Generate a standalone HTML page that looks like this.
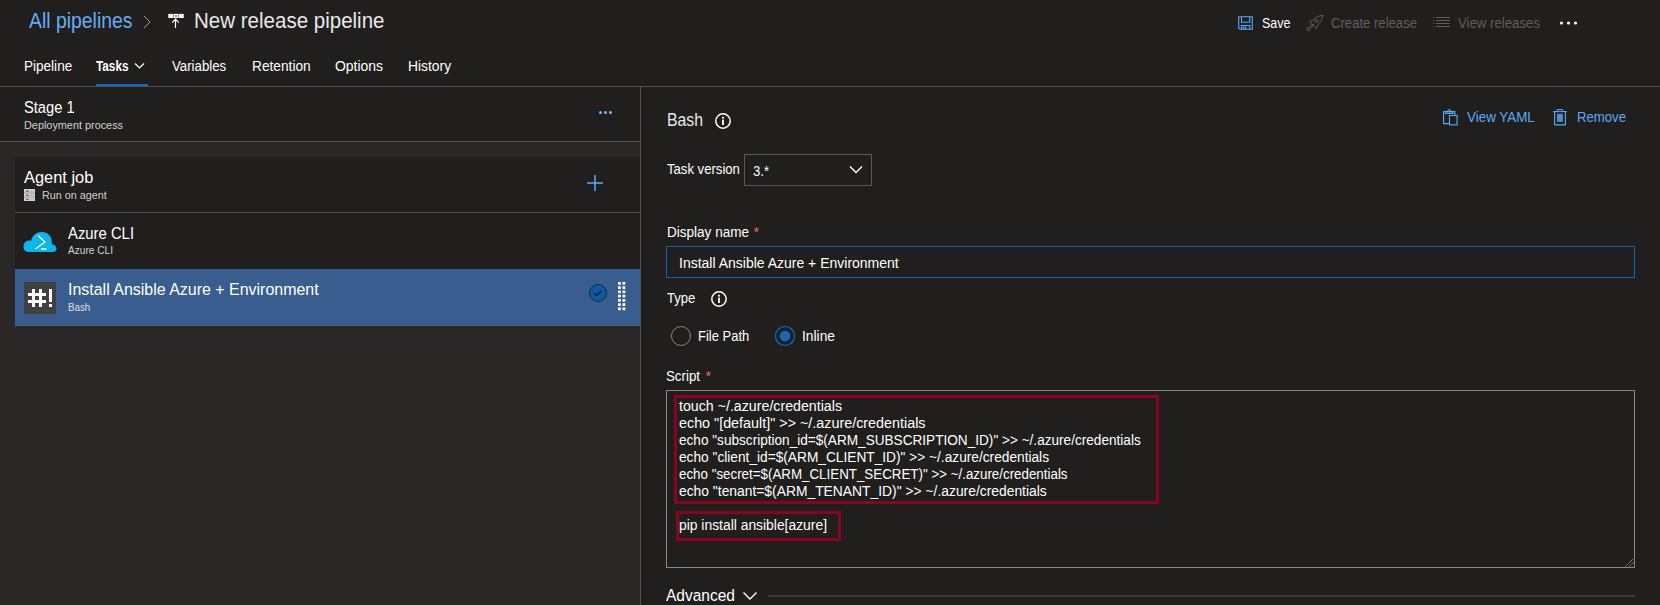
<!DOCTYPE html><html><head><meta charset="utf-8"><style>
html,body{margin:0;padding:0;width:1660px;height:605px;overflow:hidden;background:#201f1e;font-family:"Liberation Sans",sans-serif;}
.t{position:absolute;white-space:pre;}
.b{position:absolute;box-sizing:border-box;}
svg{position:absolute;overflow:visible;}
</style></head><body>
<div class="t" style="left:29px;top:10.38px;font-size:22px;line-height:22px;color:#67adf3;font-weight:normal;transform:scaleX(0.8816);transform-origin:0 0;">All pipelines</div>
<svg style="left:143px;top:15px" width="8" height="14"><path d="M1 1 L7 7 L1 13" fill="none" stroke="#a19f9d" stroke-width="1"/></svg>
<svg style="left:168px;top:13px" width="16" height="16">
<rect x="0.3" y="0.9" width="15.4" height="4.1" fill="#fff"/>
<rect x="4.9" y="0.9" width="0.8" height="4.1" fill="#6b6a8a"/><rect x="10.3" y="0.9" width="0.8" height="4.1" fill="#6b6a8a"/>
<rect x="7.3" y="2.2" width="1.4" height="1.5" fill="#3a2a3a"/>
<path d="M7.5 15 V6.2 M4.2 9.6 L7.5 6.2 L10.8 9.6" fill="none" stroke="#fff" stroke-width="1.2"/>
</svg>
<div class="t" style="left:194px;top:10.38px;font-size:22px;line-height:22px;color:#e8e8e8;font-weight:normal;transform:scaleX(0.9328);transform-origin:0 0;">New release pipeline</div>
<svg style="left:1238px;top:16px" width="15" height="14" viewBox="0 0 15 14">
<g fill="none" stroke="#5ea8fb" stroke-width="1.1">
<path d="M0.7 0.7 H14.3 V13.3 H2 L0.7 12 Z"/>
<path d="M3.5 0.7 V6.2 H11.8 V0.7"/>
<path d="M3.5 13.3 V9.5 H11.8 V13.3"/>
<path d="M5.3 13.3 V11.3 H7.8 V13.3"/>
</g></svg>
<div class="t" style="left:1262px;top:15.94px;font-size:14.25px;line-height:14.25px;color:#fff;font-weight:normal;transform:scaleX(0.8775);transform-origin:0 0;">Save</div>
<svg style="left:1306px;top:14px" width="18" height="18" viewBox="0 0 18 18">
<g fill="none" stroke="#5f5e5d" stroke-width="1">
<path d="M16.8 1.2 Q16.5 7 11.8 11.2 L10.6 14.3 L8.2 12.2 L5.8 9.8 L3.5 7.4 L6.6 6.3 Q10.8 1.5 16.8 1.2 Z"/>
<circle cx="10.6" cy="7" r="1.4"/>
<ellipse cx="6" cy="11.6" rx="1.7" ry="0.9" transform="rotate(-45 6 11.6)"/>
<circle cx="2.4" cy="15" r="1.6"/>
</g></svg>
<div class="t" style="left:1331px;top:15.94px;font-size:14.25px;line-height:14.25px;color:#5f5e5d;font-weight:normal;transform:scaleX(0.9202);transform-origin:0 0;">Create release</div>
<svg style="left:1433px;top:17px" width="17" height="12" viewBox="0 0 17 12">
<g stroke="#5f5e5d" stroke-width="1">
<path d="M0 0.5 H1 M0 3.5 H1 M0 6.5 H1 M0 9.5 H1"/>
<path d="M3 0.5 H17 M3 3.5 H17 M3 6.5 H17 M3 9.5 H17"/>
</g></svg>
<div class="t" style="left:1458px;top:15.94px;font-size:14.25px;line-height:14.25px;color:#5f5e5d;font-weight:normal;transform:scaleX(0.9271);transform-origin:0 0;">View releases</div>
<svg style="left:1559px;top:21px" width="20" height="4"><circle cx="2.5" cy="2" r="1.6" fill="#fff"/><circle cx="9.5" cy="2" r="1.6" fill="#fff"/><circle cx="16.5" cy="2" r="1.6" fill="#fff"/></svg>
<div class="t" style="left:23.5px;top:59.44px;font-size:14.25px;line-height:14.25px;color:#fff;font-weight:normal;transform:scaleX(0.9507);transform-origin:0 0;">Pipeline</div>
<div class="t" style="left:96.4px;top:59.44px;font-size:14.25px;line-height:14.25px;color:#fff;font-weight:bold;transform:scaleX(0.8261);transform-origin:0 0;">Tasks</div>
<div class="t" style="left:172.3px;top:59.44px;font-size:14.25px;line-height:14.25px;color:#fff;font-weight:normal;transform:scaleX(0.9289);transform-origin:0 0;">Variables</div>
<div class="t" style="left:251.5px;top:59.44px;font-size:14.25px;line-height:14.25px;color:#fff;font-weight:normal;transform:scaleX(0.9623);transform-origin:0 0;">Retention</div>
<div class="t" style="left:335px;top:59.44px;font-size:14.25px;line-height:14.25px;color:#fff;font-weight:normal;transform:scaleX(0.9795);transform-origin:0 0;">Options</div>
<div class="t" style="left:408.1px;top:59.44px;font-size:14.25px;line-height:14.25px;color:#fff;font-weight:normal;transform:scaleX(0.9721);transform-origin:0 0;">History</div>
<svg style="left:134px;top:62px" width="12" height="8"><path d="M1 1.5 L5.5 6 L10 1.5" fill="none" stroke="#fff" stroke-width="1.2"/></svg>
<div class="b" style="left:96px;top:84px;width:52px;height:2px;background:#0f6cbd"></div>
<div class="b" style="left:0;top:86px;width:1660px;height:1px;background:#515050"></div>
<div class="b" style="left:0;top:142px;width:640px;height:463px;background:#292827"></div>
<div class="b" style="left:0;top:141px;width:640px;height:1px;background:#515050"></div>
<div class="b" style="left:640px;top:87px;width:1px;height:518px;background:#515050"></div>
<div class="t" style="left:24.4px;top:99.24px;font-size:16.25px;line-height:16.25px;color:#fff;font-weight:normal;transform:scaleX(0.9033);transform-origin:0 0;">Stage 1</div>
<div class="t" style="left:24.4px;top:119.90px;font-size:10.75px;line-height:10.75px;color:#d2d0ce;font-weight:normal;transform:scaleX(1.0104);transform-origin:0 0;">Deployment process</div>
<svg style="left:599px;top:111px" width="14" height="3"><circle cx="1.5" cy="1.5" r="1.5" fill="#78b8f8"/><circle cx="6.5" cy="1.5" r="1.5" fill="#78b8f8"/><circle cx="11.5" cy="1.5" r="1.5" fill="#78b8f8"/></svg>
<div class="b" style="left:15px;top:157px;width:625px;height:168px;background:#201f1e"></div>
<div class="t" style="left:24.1px;top:169.24px;font-size:16.25px;line-height:16.25px;color:#fff;font-weight:normal;transform:scaleX(1.0093);transform-origin:0 0;">Agent job</div>
<svg style="left:24px;top:189px" width="11" height="12" viewBox="0 0 11 12">
<rect x="0" y="0" width="11" height="12" fill="#d4d2d0"/>
<rect x="0" y="3.7" width="11" height="0.7" fill="#8a8886"/><rect x="0" y="7.7" width="11" height="0.7" fill="#8a8886"/>
<g fill="#555"><rect x="1.8" y="1.7" width="3.2" height="1"/><rect x="1.8" y="5.7" width="3.2" height="1"/><rect x="1.8" y="9.7" width="3.2" height="1"/></g>
<g fill="#9a7ac8"><rect x="6.8" y="1.7" width="1" height="1"/><rect x="6.8" y="5.7" width="1" height="1"/><rect x="6.8" y="9.7" width="1" height="1"/></g>
<g fill="#6ab0d8"><rect x="8.6" y="1.7" width="1" height="1"/><rect x="8.6" y="5.7" width="1" height="1"/><rect x="8.6" y="9.7" width="1" height="1"/></g>
</svg>
<div class="t" style="left:41.8px;top:189.60px;font-size:10.75px;line-height:10.75px;color:#d2d0ce;font-weight:normal;transform:scaleX(1.0039);transform-origin:0 0;">Run on agent</div>
<svg style="left:587px;top:175px" width="16" height="16"><path d="M8 0 V16 M0 8 H16" stroke="#5ca9f6" stroke-width="1.5"/></svg>
<div class="b" style="left:15px;top:212px;width:625px;height:1px;background:#515050"></div>
<svg style="left:23px;top:231px" width="34" height="22" viewBox="0 0 34 22">
<path d="M6 21 C2 21 0.5 18.5 0.5 15.5 C0.5 12 3 9.5 6.5 9.5 C7 9.5 7.5 9.5 8 9.7 C9.5 4 13.5 1 19 1 C24.5 1 28.5 5 28.8 10.5 C29 12 29 13 28.8 13.3 C31.5 13.5 33.5 15.5 33.5 17.5 C33.5 19.5 32 21 30 21 Z" fill="#0cb6ea"/>
<path d="M15 4.5 L22 11 L12.5 18" fill="none" stroke="#fff" stroke-width="1.3"/>
<path d="M18 18 H23.5" stroke="#fff" stroke-width="1.5"/>
</svg>
<div class="t" style="left:68.2px;top:224.94px;font-size:16.25px;line-height:16.25px;color:#fff;font-weight:normal;transform:scaleX(0.9135);transform-origin:0 0;">Azure CLI</div>
<div class="t" style="left:68.2px;top:245.30px;font-size:10.75px;line-height:10.75px;color:#d2d0ce;font-weight:normal;transform:scaleX(0.9415);transform-origin:0 0;">Azure CLI</div>
<div class="b" style="left:15px;top:269px;width:625px;height:56px;background:#385d8e"></div>
<div class="b" style="left:15px;top:325px;width:625px;height:1px;background:#5e5d5c"></div>
<div class="b" style="left:24px;top:282px;width:32px;height:32px;background:#404040"></div>
<svg style="left:24px;top:282px" width="32" height="32"><g fill="#fff"><rect x="8" y="7" width="3" height="18"/><rect x="15" y="7" width="3" height="18"/><rect x="4" y="11" width="18" height="3"/><rect x="4" y="18" width="18" height="3"/><rect x="25" y="7" width="3" height="13"/><rect x="25" y="22" width="3" height="3"/></g></svg>
<div class="t" style="left:68.4px;top:281.24px;font-size:16.25px;line-height:16.25px;color:#fff;font-weight:normal;transform:scaleX(0.9821);transform-origin:0 0;">Install Ansible Azure + Environment</div>
<div class="t" style="left:68.4px;top:301.60px;font-size:10.75px;line-height:10.75px;color:#e1e1e1;font-weight:normal;transform:scaleX(0.9061);transform-origin:0 0;">Bash</div>
<svg style="left:589px;top:284px" width="18" height="18" viewBox="0 0 18 18"><circle cx="9" cy="9" r="8.5" fill="#0b5aa6" stroke="#1b2a3a" stroke-width="1"/><path d="M5.2 9.2 L7.8 11.5 L12.5 6.8" fill="none" stroke="#1a1a1a" stroke-width="1.5"/></svg>
<svg style="left:618px;top:282px" width="8" height="29"><rect x="0" y="0" width="2.8" height="2.7" fill="#fff"/><rect x="0" y="4.25" width="2.8" height="2.7" fill="#fff"/><rect x="0" y="8.5" width="2.8" height="2.7" fill="#fff"/><rect x="0" y="12.75" width="2.8" height="2.7" fill="#fff"/><rect x="0" y="17" width="2.8" height="2.7" fill="#fff"/><rect x="0" y="21.25" width="2.8" height="2.7" fill="#fff"/><rect x="0" y="25.5" width="2.8" height="2.7" fill="#fff"/><rect x="4.5" y="0" width="2.8" height="2.7" fill="#fff"/><rect x="4.5" y="4.25" width="2.8" height="2.7" fill="#fff"/><rect x="4.5" y="8.5" width="2.8" height="2.7" fill="#fff"/><rect x="4.5" y="12.75" width="2.8" height="2.7" fill="#fff"/><rect x="4.5" y="17" width="2.8" height="2.7" fill="#fff"/><rect x="4.5" y="21.25" width="2.8" height="2.7" fill="#fff"/><rect x="4.5" y="25.5" width="2.8" height="2.7" fill="#fff"/></svg>
<div class="t" style="left:666.7px;top:110.51px;font-size:18.3px;line-height:18.3px;color:#e8e8e8;font-weight:normal;transform:scaleX(0.8655);transform-origin:0 0;">Bash</div>
<svg style="left:715px;top:112.5px" width="16" height="16" viewBox="0 0 16 16"><circle cx="8" cy="8" r="7.2" fill="none" stroke="#fff" stroke-width="1.5"/><rect x="7.1" y="6.6" width="1.8" height="5.4" fill="#fff"/><rect x="7.1" y="3.8" width="1.8" height="1.8" fill="#fff"/></svg>
<svg style="left:1443px;top:109px" width="15" height="17" viewBox="0 0 15 17">
<g fill="none" stroke="#5ca9f6" stroke-width="1.1">
<path d="M6.5 14.6 H0.6 V2.6 H11.9 V6.3"/>
<path d="M2.6 2.6 V4.4 H9.9 V2.6"/>
<path d="M4.6 2.6 Q4.8 0.5 6.25 0.5 Q7.7 0.5 7.9 2.6"/>
<rect x="6.5" y="6.5" width="7.6" height="9.4" fill="#201f1e"/>
</g></svg>
<div class="t" style="left:1466.6px;top:109.94px;font-size:14.25px;line-height:14.25px;color:#5ca9f6;font-weight:normal;transform:scaleX(0.9407);transform-origin:0 0;">View YAML</div>
<svg style="left:1553px;top:109px" width="14" height="17" viewBox="0 0 14 17">
<rect x="3.9" y="4.9" width="5.9" height="7.9" fill="#5d7fa8"/>
<path d="M5 4.9 V12.8 M6.9 4.9 V12.8 M8.8 4.9 V12.8" stroke="#4a9af5" stroke-width="1"/>
<g fill="none" stroke="#5ca9f6" stroke-width="1.1">
<path d="M0 2.6 H14"/>
<path d="M4.2 2.6 V1.6 Q4.2 0.5 5.5 0.5 H8.5 Q9.8 0.5 9.8 1.6 V2.6"/>
<path d="M1.6 2.6 V15.4 Q1.6 15.9 2.1 15.9 H11.9 Q12.4 15.9 12.4 15.4 V2.6"/>
</g></svg>
<div class="t" style="left:1577px;top:109.94px;font-size:14.25px;line-height:14.25px;color:#5ca9f6;font-weight:normal;transform:scaleX(0.9235);transform-origin:0 0;">Remove</div>
<div class="t" style="left:666.7px;top:161.64px;font-size:14.25px;line-height:14.25px;color:#fff;font-weight:normal;transform:scaleX(0.9205);transform-origin:0 0;">Task version</div>
<div class="b" style="left:744px;top:154px;width:128px;height:32px;border:1px solid #5a5958"></div>
<div class="t" style="left:753px;top:163.94px;font-size:14.25px;line-height:14.25px;color:#fff;font-weight:normal;transform:scaleX(0.9180);transform-origin:0 0;">3.*</div>
<svg style="left:849px;top:165px" width="14" height="9"><path d="M1 1.5 L7 7.5 L13 1.5" fill="none" stroke="#fff" stroke-width="1.3"/></svg>
<div class="t" style="left:666.7px;top:224.94px;font-size:14.25px;line-height:14.25px;color:#fff;font-weight:normal;transform:scaleX(0.9499);transform-origin:0 0;">Display name</div>
<div class="t" style="left:753.5px;top:224.94px;font-size:14.25px;line-height:14.25px;color:#ee6a6e;font-weight:normal;">*</div>
<div class="b" style="left:666px;top:246px;width:969px;height:32px;border:1px solid #0c66b6"></div>
<div class="t" style="left:679.3px;top:255.74px;font-size:14.25px;line-height:14.25px;color:#fff;font-weight:normal;transform:scaleX(0.9819);transform-origin:0 0;">Install Ansible Azure + Environment</div>
<div class="t" style="left:666.8px;top:290.94px;font-size:14.25px;line-height:14.25px;color:#fff;font-weight:normal;transform:scaleX(0.9129);transform-origin:0 0;">Type</div>
<svg style="left:710.5px;top:290.5px" width="16" height="16" viewBox="0 0 16 16"><circle cx="8" cy="8" r="7.2" fill="none" stroke="#fff" stroke-width="1.5"/><rect x="7.1" y="6.6" width="1.8" height="5.4" fill="#fff"/><rect x="7.1" y="3.8" width="1.8" height="1.8" fill="#fff"/></svg>
<svg style="left:670px;top:325px" width="22" height="22" viewBox="0 0 22 22"><circle cx="11" cy="11" r="9.5" fill="none" stroke="#8a8886" stroke-width="1"/></svg>
<div class="t" style="left:697.5px;top:328.94px;font-size:14.25px;line-height:14.25px;color:#fff;font-weight:normal;transform:scaleX(0.9114);transform-origin:0 0;">File Path</div>
<svg style="left:774px;top:325px" width="22" height="22" viewBox="0 0 22 22"><circle cx="11" cy="11" r="9.5" fill="none" stroke="#0f6cbd" stroke-width="1.2"/><circle cx="11" cy="11" r="5.3" fill="#0f6cbd"/></svg>
<div class="t" style="left:801.7px;top:328.94px;font-size:14.25px;line-height:14.25px;color:#fff;font-weight:normal;transform:scaleX(0.9688);transform-origin:0 0;">Inline</div>
<div class="t" style="left:666.3px;top:368.74px;font-size:14.25px;line-height:14.25px;color:#fff;font-weight:normal;transform:scaleX(0.9334);transform-origin:0 0;">Script</div>
<div class="t" style="left:705.5px;top:368.94px;font-size:14.25px;line-height:14.25px;color:#ee6a6e;font-weight:normal;">*</div>
<div class="b" style="left:666px;top:390px;width:969px;height:178px;border:1px solid #8a8886"></div>
<svg style="left:1624px;top:557px" width="10" height="10"><path d="M1.5 9.5 L9.5 1.5 M5.5 9.5 L9.5 5.5" stroke="#b0aeac" stroke-width="1" stroke-dasharray="1 0.6"/></svg>
<div class="b" style="left:674px;top:395px;width:485px;height:109px;border:3px solid #8a0322"></div>
<div class="b" style="left:676px;top:511px;width:165px;height:30px;border:3px solid #8a0322"></div>
<div class="t" style="left:679px;top:399.24px;font-size:14.25px;line-height:14.25px;color:#fff;font-weight:normal;transform:scaleX(0.9965);transform-origin:0 0;">touch ~/.azure/credentials</div>
<div class="t" style="left:679px;top:416.24px;font-size:14.25px;line-height:14.25px;color:#fff;font-weight:normal;transform:scaleX(1.0062);transform-origin:0 0;">echo "[default]" &gt;&gt; ~/.azure/credentials</div>
<div class="t" style="left:679px;top:433.24px;font-size:14.25px;line-height:14.25px;color:#fff;font-weight:normal;transform:scaleX(0.9545);transform-origin:0 0;">echo "subscription_id=$(ARM_SUBSCRIPTION_ID)" &gt;&gt; ~/.azure/credentials</div>
<div class="t" style="left:679px;top:450.24px;font-size:14.25px;line-height:14.25px;color:#fff;font-weight:normal;transform:scaleX(0.9617);transform-origin:0 0;">echo "client_id=$(ARM_CLIENT_ID)" &gt;&gt; ~/.azure/credentials</div>
<div class="t" style="left:679px;top:467.24px;font-size:14.25px;line-height:14.25px;color:#fff;font-weight:normal;transform:scaleX(0.9366);transform-origin:0 0;">echo "secret=$(ARM_CLIENT_SECRET)" &gt;&gt; ~/.azure/credentials</div>
<div class="t" style="left:679px;top:484.24px;font-size:14.25px;line-height:14.25px;color:#fff;font-weight:normal;transform:scaleX(0.9717);transform-origin:0 0;">echo "tenant=$(ARM_TENANT_ID)" &gt;&gt; ~/.azure/credentials</div>
<div class="t" style="left:679px;top:517.54px;font-size:14.25px;line-height:14.25px;color:#fff;font-weight:normal;transform:scaleX(0.9732);transform-origin:0 0;">pip install ansible[azure]</div>
<div class="t" style="left:666px;top:587.04px;font-size:16.25px;line-height:16.25px;color:#fff;font-weight:normal;transform:scaleX(0.9547);transform-origin:0 0;">Advanced</div>
<svg style="left:742px;top:591px" width="16" height="10"><path d="M1.5 1.5 L8 8 L14.5 1.5" fill="none" stroke="#fff" stroke-width="1.4"/></svg>
<div class="b" style="left:768px;top:595px;width:867px;height:2px;background:#3b3a39"></div>
</body></html>
